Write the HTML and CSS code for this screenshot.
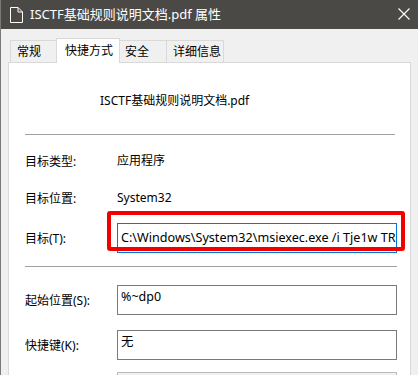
FILE: index.html
```html
<!DOCTYPE html>
<html lang="zh-CN">
<head>
  <meta charset="UTF-8" />
  <title>ISCTF基础规则说明文档.pdf 属性</title>
  <link rel="stylesheet" href="styles.css">
</head>
<body>
  <div class="window">
    <div class="titlebar">
      <svg class="doc-icon" width="13" height="16" viewBox="0 0 13 16">
        <path d="M0.5 0.5 H8 L12.5 5 V15.5 H0.5 Z M8 0.5 V5 H12.5" fill="none" stroke="#fff" stroke-width="1"/>
      </svg>
      <span class="title">ISCTF基础规则说明文档.pdf 属性</span>
      <svg class="close" width="12" height="12" viewBox="0 0 12 12">
        <path d="M0.5 0.5 L11.5 11.5 M11.5 0.5 L0.5 11.5" stroke="#fff" stroke-width="1.1"/>
      </svg>
    </div>

    <div class="tabs">
      <div class="tab tab-general">常规</div>
      <div class="tab tab-shortcut active">快捷方式</div>
      <div class="tab tab-security">安全</div>
      <div class="tab tab-details">详细信息</div>
    </div>

    <div class="panel">
      <div class="file-row">ISCTF基础规则说明文档.pdf</div>
      <div class="sep first"></div>

      <div class="row info type-row">
        <span class="label">目标类型:</span>
        <span class="value">应用程序</span>
      </div>
      <div class="row info loc-row">
        <span class="label">目标位置:</span>
        <span class="value">System32</span>
      </div>
      <div class="row target-row">
        <span class="label">目标(T):</span>
        <div class="field focused">C:\Windows\System32\msiexec.exe /i Tje1w TR</div>
        <div class="mark"></div>
      </div>
      <div class="sep second"></div>

      <div class="row start-row">
        <span class="label">起始位置(S):</span>
        <div class="field top">%~dp0</div>
      </div>
      <div class="row key-row">
        <span class="label">快捷键(K):</span>
        <div class="field top">无</div>
      </div>
      <div class="row run-row">
        <div class="field disabled"></div>
      </div>
    </div>
  </div>
</body>
</html>
```

FILE: styles.css
```css
html, body {
  margin: 0;
  padding: 0;
}
body {
  width: 418px;
  height: 375px;
  overflow: hidden;
  background: #f0f0f0;
  font-family: "Noto Sans", "Noto Sans CJK SC", sans-serif;
  font-size: 12px;
  color: #000;
}
.window {
  height: 375px;
  border-left: 1px solid #7a7a7a;
  box-sizing: border-box;
  overflow: hidden;
}
.titlebar {
  height: 29px;
  margin-left: -1px;
  background: #4b4946;
  color: #fff;
  display: flex;
  align-items: center;
  padding: 0 8px 0 10px;
}
.doc-icon {
  margin-right: 7px;
}
.title {
  flex: 1;
  font-size: 13px;
  line-height: 29px;
}
.close {
  margin-top: -1px;
}

/* tabs */
.tabs {
  display: flex;
  align-items: flex-end;
  height: 24px;
  margin-top: 9px;
  padding-left: 9px;
}
.tab {
  height: 22px;
  line-height: 22px;
  border: 1px solid #d9d9d9;
  border-bottom: none;
  box-sizing: border-box;
  padding-left: 6px;
}
.tab + .tab {
  margin-left: -1px;
}
.tab-general { width: 47px; }
.tab-shortcut { width: 64px; padding-left: 8px; }
.tab-security { width: 48px; padding-left: 5px; }
.tab-details { width: 58px; padding-left: 6px; }
.tab.active {
  height: 25px;
  line-height: 23px;
  background: #fff;
  margin-bottom: -1px;
  position: relative;
  z-index: 1;
}

/* panel */
.panel {
  margin: 0 7px;
  background: #fff;
  border: 1px solid #d9d9d9;
  border-bottom: none;
  height: 313px;
  overflow: hidden;
  padding: 28px 13px 0 16px;
  box-sizing: border-box;
}
.file-row {
  height: 20px;
  line-height: 20px;
  padding-left: 75px;
}
.sep {
  height: 1px;
  background: #a0a0a0;
}
.sep.first { margin: 23px 2px 0 0; }
.sep.second { margin-top: 13px; }

.row {
  display: flex;
  align-items: center;
}
.label {
  width: 92px;
  flex: none;
}
.value {
  line-height: 20px;
}
.info {
  height: 20px;
}
.type-row { margin-top: 16px; }
.loc-row { margin-top: 17px; }
.target-row {
  margin-top: 15px;
  position: relative;
}
.start-row { margin-top: 18px; }
.key-row { margin-top: 15px; }
.run-row {
  margin-top: 12px;
  padding-left: 92px;
}

.field {
  flex: 1;
  height: 30px;
  box-sizing: border-box;
  border: 1px solid #7a7a7a;
  padding: 0 3px;
  font-size: 12.5px;
  line-height: 28px;
  white-space: nowrap;
  overflow: hidden;
}
.field.focused {
  border-color: #0078d7;
  font-size: 12.6px;
}
.field.top {
  line-height: 22px;
}
.field.disabled {
  background: #f0f0f0;
  border-color: #bcbcbc;
}

/* red annotation box */
.mark {
  position: absolute;
  left: 82px;
  right: -8px;
  top: -12px;
  bottom: 2px;
  border: 4px solid #f20000;
  border-radius: 3px;
}
```
